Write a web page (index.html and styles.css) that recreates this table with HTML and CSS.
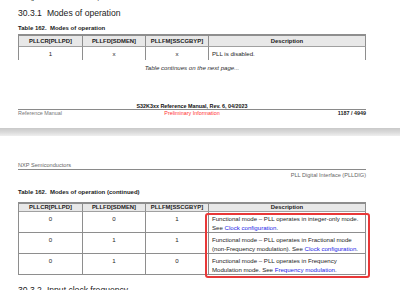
FILE: index.html
```html
<!DOCTYPE html>
<html lang="en">
<head>
<meta charset="utf-8">
<title>Modes of operation</title>
<link rel="stylesheet" href="styles.css">
</head>
<body>
<div class="sheet">
  <p class="cutline">configuration and the PLL output clock are described in the sections below.</p>
  <h2 class="heading"><span class="num">30.3.1</span>Modes of operation</h2>
  <p class="caption">Table 162.&nbsp; Modes of operation</p>
  <div class="tbl t1">
    <div class="th">PLLCR[PLLPD]</div>
    <div class="th">PLLFD[SDMEN]</div>
    <div class="th">PLLFM[SSCGBYP]</div>
    <div class="th">Description</div>
    <div class="td c">1</div>
    <div class="td c">x</div>
    <div class="td c">x</div>
    <div class="td">PLL is disabled.</div>
  </div>
  <p class="continues">Table continues on the next page...</p>
  <footer class="pfoot">
    <div class="doc-title">S32K3xx Reference Manual, Rev. 6, 04/2023</div>
    <div class="foot-row">
      <span class="rm">Reference Manual</span>
      <span class="prelim">Preliminary Information</span>
      <span class="pg">1187 / 4949</span>
    </div>
  </footer>
</div>
<div class="band"></div>
<div class="sheet">
  <header class="phead">
    <div class="company">NXP Semiconductors</div>
    <div class="chapter">PLL Digital Interface (PLLDIG)</div>
  </header>
  <p class="caption caption2">Table 162.&nbsp; Modes of operation (continued)</p>
  <div class="tbl t2">
    <div class="th">PLLCR[PLLPD]</div>
    <div class="th">PLLFD[SDMEN]</div>
    <div class="th">PLLFM[SSCGBYP]</div>
    <div class="th">Description</div>

    <div class="td c">0</div>
    <div class="td c">0</div>
    <div class="td c">1</div>
    <div class="td">Functional mode – PLL operates in integer-only mode. See <span class="lnk">Clock configuration</span>.</div>

    <div class="td c">0</div>
    <div class="td c">1</div>
    <div class="td c">1</div>
    <div class="td">Functional mode – PLL operates in Fractional mode (non-Frequency modulation). See <span class="lnk">Clock configuration</span>.</div>

    <div class="td c">0</div>
    <div class="td c">1</div>
    <div class="td c">0</div>
    <div class="td">Functional mode – PLL operates in Frequency Modulation mode. See <span class="lnk">Frequency modulation</span>.</div>

    <div class="highlight"></div>
  </div>
  <h2 class="heading heading2"><span class="num">30.3.2</span>Input clock frequency</h2>
</div>
</body>
</html>
```

FILE: styles.css
```css
html, body {
  margin: 0;
  padding: 0;
  background: #ffffff;
}
body {
  font-family: "Liberation Sans", Arial, sans-serif;
  color: #1e1e1e;
  overflow: hidden;
}
p { margin: 0; }

.sheet {
  width: 348px;
  padding-left: 18px;
}

.cutline {
  font-size: 6.1px;
  line-height: 8px;
  margin-top: -6px;
  white-space: nowrap;
}

.heading {
  margin: 6px 0 0;
  font-size: 8.6px;
  line-height: 10px;
  font-weight: normal;
  color: #1a1a1a;
  white-space: nowrap;
}
.heading .num {
  margin-right: 5px;
}

.caption {
  margin-top: 6px;
  font-size: 6px;
  line-height: 8px;
  font-weight: bold;
  color: #1a1a1a;
}

.tbl {
  position: relative;
  display: grid;
  grid-template-columns: 64px 63px 63px 1fr;
  box-sizing: border-box;
  width: 348px;
  border-top: 2px solid #8e8e8e;
  border-left: 1px solid #8e8e8e;
  font-size: 6.1px;
}
.th {
  background: #e8e8e8;
  font-weight: bold;
  font-size: 5.9px;
  text-align: center;
  border-right: 1px solid #8e8e8e;
  border-bottom: 1px solid #a0a0a0;
  color: #1a1a1a;
}
.td {
  border-right: 1px solid #8e8e8e;
  padding: 0 3px;
  color: #1e1e1e;
}
.td.c { text-align: center; }

.t1 { margin-top: 2px; }
.t1 .th { line-height: 10px; }
.t1 .td { padding-top: 3px; padding-bottom: 2px; line-height: 8px; }

.continues {
  margin-top: 4px;
  font-size: 6.1px;
  line-height: 8px;
  font-style: italic;
  text-align: center;
  color: #2a2a2a;
}

.pfoot { margin-top: 31px; }
.doc-title {
  font-size: 5.4px;
  line-height: 6px;
  font-weight: bold;
  text-align: center;
  border-bottom: 1px solid #8a8a8a;
  color: #111;
}
.foot-row {
  display: grid;
  grid-template-columns: 1fr auto 1fr;
  font-size: 5.4px;
  line-height: 6px;
}
.rm { color: #777; }
.prelim { color: #ff3030; }
.pg { justify-self: end; font-weight: bold; color: #222; }

.band {
  margin-top: 12px;
  height: 8px;
  background: linear-gradient(#c9c9c9, #d9d9d9 50%, #efefef);
}

.phead { margin-top: 26px; }
.company {
  font-size: 5.6px;
  line-height: 7px;
  color: #666;
  border-bottom: 1px solid #8a8a8a;
}
.chapter {
  margin-top: 2px;
  font-size: 5.6px;
  line-height: 6px;
  color: #666;
  text-align: right;
}

.caption2 { margin-top: 10px; }

.t2 { margin-top: 6px; }
.t2 .th { line-height: 7px; }
.t2 .td {
  padding-top: 2px;
  padding-bottom: 0;
  line-height: 9px;
  border-bottom: 1px solid #8e8e8e;
  min-height: 18px;
}
.lnk { color: #2424e6; }

.highlight {
  position: absolute;
  left: 186px;
  top: 9px;
  width: 165px;
  height: 65px;
  box-sizing: border-box;
  border: 2px solid #e83838;
  border-radius: 3px;
}

.heading2 { margin-top: 10px; }
```
